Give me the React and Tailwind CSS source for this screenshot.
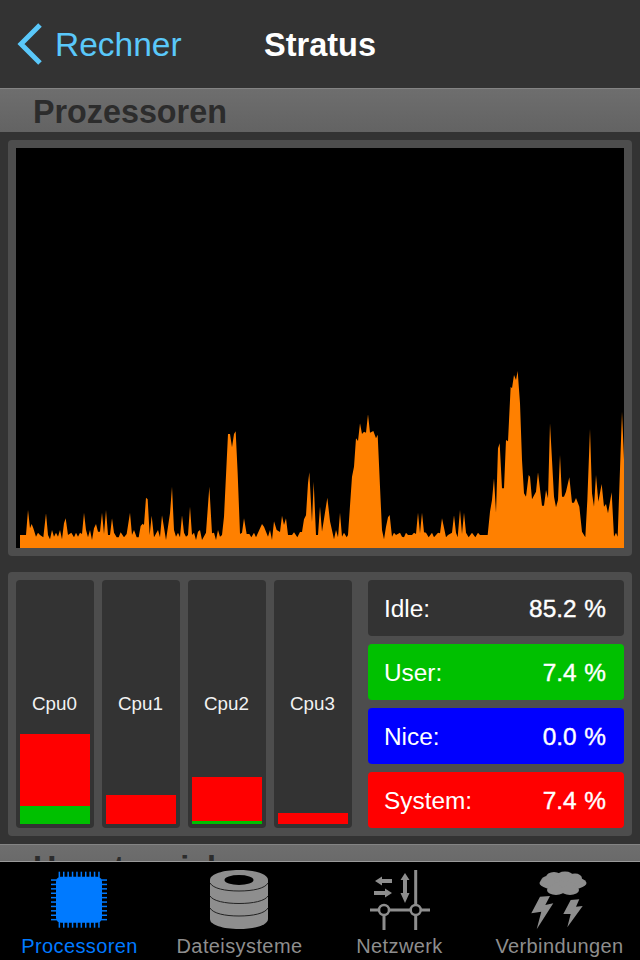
const left = [60,564,60,525,78,525,84,450,90,505,95,492,100,505,108,530,114,518,120,525,130,532,138,460,144,525,150,538,156,510,162,530,168,518,174,530,180,510,186,538,192,490,197,475,204,525,214,518,222,532,228,518,234,530,240,518,246,522,252,458,258,510,264,532,270,510,276,540,282,505,288,492,294,515,300,515,306,458,312,522,318,450,324,525,330,525,336,475,342,518,350,532,356,532,362,517,372,532,380,522,390,458,396,525,402,510,410,532,416,532,422,498,428,491,432,495,438,413,443,418,449,525,455,467,462,532,474,510,480,532,486,466,498,540,510,460,516,380,522,510,528,530,534,518,540,532,546,466,552,518,558,530,564,525,570,440,576,525,582,518,588,540,594,515,600,510,606,540,618,518,628,380,636,520,642,518,648,540,654,510,660,530,666,525,672,470,684,222,690,222,696,262,702,222,707,214,713,340,720,522,726,518,732,475,740,522,748,522,754,532,762,518,768,532,786,492,792,500,804,530,810,510,816,540,822,484,830,510,840,516,846,467,852,495,858,475,864,525,876,525,882,517,892,532,900,516,906,516,912,478,918,466,924,370,928,337,936,487,941,365,948,525,954,525]
const right = [0,440,6,515,22,413,30,484,42,538,48,510,54,532,60,458,66,530,72,518,80,532,84,525,96,350,102,320,108,235,114,243,120,190,126,222,132,215,138,218,144,163,150,218,160,213,168,235,173,224,180,380,186,510,192,538,198,500,204,472,209,465,216,530,222,518,228,525,240,518,246,530,252,532,258,518,264,525,276,525,282,518,288,522,294,458,300,520,306,458,312,517,318,518,326,532,336,518,342,532,354,518,360,520,366,475,378,532,384,525,396,518,402,466,408,518,413,532,420,450,426,522,432,458,438,518,446,532,456,518,466,532,474,518,480,525,503,525,510,455,516,420,522,355,528,458,534,265,539,250,546,385,552,385,558,240,564,244,572,80,576,85,582,45,588,60,593,33,600,130,606,300,612,400,618,410,626,345,630,350,636,418,648,395,654,337,666,437,672,437,678,390,684,415,690,190,702,410,708,442,714,420,720,285,726,410,732,410,738,395,748,352,756,428,762,428,768,414,778,440,786,515,796,532,802,420,810,207,816,400,822,440,828,345,835,425,845,372,852,440,858,432,864,460,875,397,882,530,888,518,893,530,906,155,912,300,912,564]

// readings were taken off 3x crops, convert back to page pixels
function toPoints() {
  const out = []
  for (let i = 0; i < left.length; i += 2) out.push(`${left[i] / 3},${360 + left[i + 1] / 3}`)
  for (let i = 0; i < right.length; i += 2) out.push(`${320 + right[i] / 3},${360 + right[i + 1] / 3}`)
  return out.join(' ')
}

const cpus = [
  { name: 'Cpu0', red: 'h-[72px]', green: 'h-[18px]' },
  { name: 'Cpu1', red: 'h-[29px]', green: 'h-0' },
  { name: 'Cpu2', red: 'h-[44px]', green: 'h-[3px]' },
  { name: 'Cpu3', red: 'h-[11px]', green: 'h-0' },
]

const stats = [
  { label: 'Idle:', value: '85.2 %', bg: 'bg-[#333333]' },
  { label: 'User:', value: '7.4 %', bg: 'bg-[#00c000]' },
  { label: 'Nice:', value: '0.0 %', bg: 'bg-[#0000ff]' },
  { label: 'System:', value: '7.4 %', bg: 'bg-[#ff0000]' },
]

function SectionHeader({ title }) {
  return (
    <div className="h-[44px] shrink-0 border-t border-[#848484] bg-gradient-to-b from-[#6e6e6e] to-[#636363] pl-[33px] text-[32.3px] font-bold leading-[46px] text-[#2c2c2c]">
      {title}
    </div>
  )
}

function CpuIcon() {
  const pins = [0, 1, 2, 3, 4, 5, 6, 7, 8, 9]
  return (
    <svg width="64" height="64" viewBox="0 0 64 64" fill="#007aff">
      <rect x="8" y="8.700" width="46" height="46" rx="5" />
      {pins.map(i => (
        <g key={i}>
          <rect x={10.6 + i * 4.4} y="3.700" width="1.5" height="6" />
          <rect x={10.6 + i * 4.4} y="53.700" width="1.5" height="6" />
          <rect x="3" y={11.3 + i * 4.4} width="6" height="1.5" />
          <rect x="53" y={11.3 + i * 4.4} width="6" height="1.5" />
        </g>
      ))}
    </svg>
  )
}

function DiskIcon() {
  return (
    <svg width="60" height="60" viewBox="0 0 60 60" fill="none">
      <path d="M0 10C0 4 13 0 29 0s29 4 29 10v39c0 6-13 10-29 10S0 55 0 49z" fill="#8e8e8e" />
      <ellipse cx="29" cy="10" rx="14.500" ry="5" fill="#000" />
      <path d="M0 13c3 5.500 15 8 29 8s26-2.500 29-8" stroke="#222" strokeWidth="1" />
      <path d="M0 26c3 5 15 7.500 29 7.500s26-2.500 29-7.500" stroke="#222" strokeWidth="1" />
      <path d="M0 38c3 5.500 15 8 29 8s26-2.500 29-8" stroke="#222" strokeWidth="1" />
    </svg>
  )
}

function NetIcon() {
  return (
    <svg width="60" height="60" viewBox="0 0 60 60" fill="#8e8e8e">
      <rect x="0" y="38.500" width="60" height="3" />
      <rect x="44.200" y="0" width="3" height="60" />
      <rect x="12.500" y="40" width="3" height="20" />
      <circle cx="14" cy="40" r="5" fill="#000" stroke="#8e8e8e" strokeWidth="2.500" />
      <circle cx="45.700" cy="40" r="5" fill="#000" stroke="#8e8e8e" strokeWidth="2.500" />
      <path d="M5 11l7-4.500V9h10v4H12v2.500z" />
      <path d="M22 23l-7 4.500V25H4v-4h11v-2.500z" />
      <path d="M35 3l4.500 7H37v13h2.500L35 33l-4.500-10H33V10h-2.500z" />
    </svg>
  )
}

function StormIcon() {
  return (
    <svg width="60" height="60" viewBox="0 0 60 60" fill="#8e8e8e">
      <ellipse cx="33" cy="13" rx="23.500" ry="7.500" />
      <ellipse cx="24" cy="7.500" rx="8" ry="5.500" />
      <ellipse cx="35" cy="6.500" rx="8.500" ry="5" />
      <ellipse cx="45" cy="8.500" rx="7" ry="5" />
      <ellipse cx="18" cy="11" rx="7" ry="5" />
      <ellipse cx="26" cy="20" rx="9" ry="5" />
      <ellipse cx="40" cy="20" rx="9" ry="5" />
      <polygon points="10,26.700 20,26 15.300,35 23.300,33.300 6.700,59.300 11.300,41.700 1.300,43.300" />
      <polygon points="40.700,30 49.300,29.300 46,36.700 52.700,36 37.300,57.300 40.700,44 33.300,44" />
    </svg>
  )
}

const tabs = [
  { label: 'Processoren', icon: <CpuIcon />, active: true },
  { label: 'Dateisysteme', icon: <DiskIcon /> },
  { label: 'Netzwerk', icon: <NetIcon /> },
  { label: 'Verbindungen', icon: <StormIcon /> },
]

export default function App() {
  return (
    <div className="flex h-[960px] w-[640px] flex-col overflow-hidden bg-[#333333] font-['Liberation_Sans',Arial,sans-serif] text-white">
      {/* Nav bar */}
      <div className="relative flex h-[88px] shrink-0 items-center pl-[16px]">
        <svg width="28" height="44" viewBox="0 0 28 44" fill="none" className="mr-[11px]">
          <path d="M24 3L5 22l19 19" stroke="#5ac8fa" strokeWidth="5" />
        </svg>
        <span className="pt-[2px] text-[33.5px] leading-none text-[#5ac8fa]">Rechner</span>
        <span className="absolute inset-x-0 pt-[2px] text-center text-[32.5px] font-bold leading-none">Stratus</span>
      </div>

      <div className="flex min-h-0 flex-1 flex-col overflow-hidden">
        <SectionHeader title="Prozessoren" />

        {/* History chart */}
        <div className="mx-2 mt-2 shrink-0 rounded-[4px] bg-[#4d4d4d] p-2">
          <svg width="608" height="400" viewBox="16 148 608 400" className="block bg-black">
            <polygon points={toPoints()} fill="#ff8000" />
          </svg>
        </div>

        {/* Per cpu bars and totals */}
        <div className="mx-2 mt-4 flex h-[264px] shrink-0 gap-2 rounded-[4px] bg-[#4d4d4d] p-2">
          {cpus.map(c => (
            <div key={c.name} className="grid w-[78px] rounded-[4px] bg-[#333333] p-1">
              <div className="self-center pr-[1px] text-center text-[18.8px] leading-none text-[#f2f2f2] [grid-area:1/1]">{c.name}</div>
              <div className="flex flex-col self-end [grid-area:1/1]">
                <div className={`${c.red} bg-[#ff0000]`} />
                <div className={`${c.green} bg-[#00c000]`} />
              </div>
            </div>
          ))}
          <div className="ml-2 flex flex-1 flex-col gap-2">
            {stats.map(s => (
              <div key={s.label} className={`${s.bg} flex h-[56px] items-center justify-between rounded-[4px] pl-[16px] pr-[18px] pt-[2px] text-[24.4px] leading-none`}>
                <span>{s.label}</span>
                <span className="[word-spacing:1px] [-webkit-text-stroke:0.4px_white]">{s.value}</span>
              </div>
            ))}
          </div>
        </div>

        <div className="mt-2">
          <SectionHeader title="Hauptspeicher" />
        </div>
      </div>

      {/* Tab bar */}
      <div className="flex h-[99px] shrink-0 border-t border-[#9a9a9a] bg-black">
        {tabs.map(t => (
          <div key={t.label} className="flex w-[160px] flex-col items-center pt-[8px]">
            <div className="flex h-[60px] items-center">{t.icon}</div>
            <span className={`mt-[4px] pr-[1px] text-[20px] leading-[24px] tracking-[0.4px] ${t.active ? 'text-[#007aff]' : 'text-[#8e8e8e]'}`}>{t.label}</span>
          </div>
        ))}
      </div>
    </div>
  )
}
